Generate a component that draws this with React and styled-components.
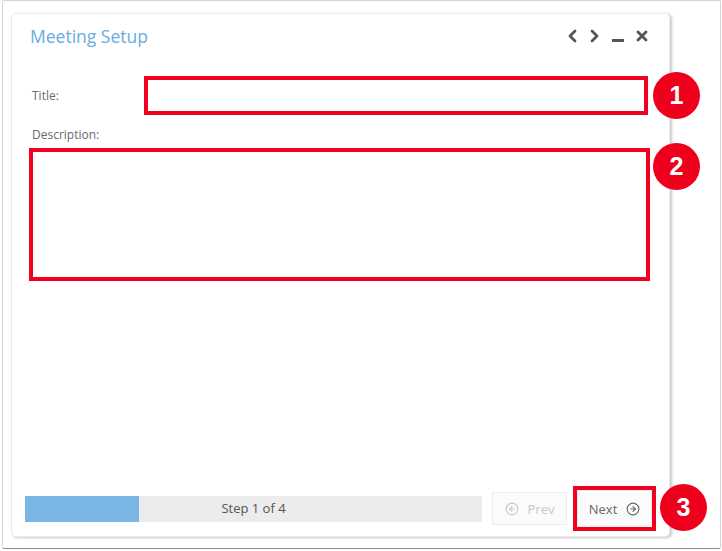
import styled, { createGlobalStyle } from "styled-components";
import { CircleArrowLeft, CircleArrowRight } from "lucide-react";

const GlobalStyle = createGlobalStyle`
  html, body {
    margin: 0;
    padding: 0;
    background: #ffffff;
  }
  body {
    font-family: "Open Sans", "Liberation Sans", sans-serif;
  }
`;

// the screenshot frame around the whole dialog
const Frame = styled.div`
  box-sizing: border-box;
  margin: 0 0 0 2px;
  width: 719px;
  height: 549px;
  border: 1px solid #d4d4d4;
  border-bottom-color: #8c8c8c;
  border-radius: 2px;
  padding: 12px 0 0 8px;
`;

const Dialog = styled.div`
  box-sizing: border-box;
  width: 659px;
  height: 524px;
  background: #fff;
  border: 1px solid #ececec;
  border-radius: 5px;
  box-shadow: 2px 1px 3px rgba(0, 0, 0, 0.22);
  display: flex;
  flex-direction: column;
`;

const Header = styled.div`
  display: flex;
  align-items: center;
  justify-content: space-between;
  padding: 10px 21px 0 18px;
  height: 24px;
`;

const Title = styled.div`
  font-size: 17.5px;
  line-height: 24px;
  color: #69acdf;
`;

const Controls = styled.div`
  display: flex;
  align-items: center;
  gap: 11px;
  color: #555;
`;

const FieldRow = styled.div`
  display: flex;
  align-items: center;
  margin: 28px 0 0 20px;
`;

const Label = styled.div`
  width: ${(p) => p.$width || "auto"};
  font-size: 12px;
  line-height: 16px;
  color: #6a6a6a;
`;

const DescLabel = styled(Label)`
  margin: 12px 0 0 20px;
`;

const Highlight = styled.div`
  position: relative;
  box-sizing: border-box;
  width: ${(p) => p.$w}px;
  height: ${(p) => p.$h}px;
  border: 4px solid #f2001f;
  margin: ${(p) => p.$margin || "0"};
  display: flex;
  background: #fff;
`;

const Badge = styled.div`
  position: absolute;
  width: 47px;
  height: 47px;
  border-radius: 50%;
  background: #ee001c;
  color: #fff;
  font-family: "Liberation Sans", Arial, sans-serif;
  font-weight: bold;
  font-size: 25px;
  display: flex;
  align-items: center;
  justify-content: center;
  right: ${(p) => p.$right}px;
  top: ${(p) => p.$top}px;
`;

const Spacer = styled.div`
  flex: 1;
`;

const Footer = styled.div`
  display: flex;
  align-items: center;
  padding: 0 0 5px 13px;
`;

const Progress = styled.div`
  position: relative;
  width: 457px;
  height: 26px;
  background: #ececec;
  display: flex;
  align-items: center;
  justify-content: center;
  font-size: 13px;
  color: #555;
  overflow: hidden;
`;

const Fill = styled.div`
  position: absolute;
  left: 0;
  top: 0;
  bottom: 0;
  background: #7ab6e3;
`;

const StepText = styled.span`
  position: relative;
  line-height: 26px;
  margin-top: -2px;
`;

const Button = styled.div`
  box-sizing: border-box;
  display: flex;
  align-items: center;
  justify-content: center;
  gap: 9px;
  width: ${(p) => p.$w}px;
  height: ${(p) => p.$h}px;
  margin-left: ${(p) => p.$ml || 0}px;
  border: 1px solid #ededed;
  background: #fbfbfb;
  font-size: 13px;
  color: ${(p) => (p.$disabled ? "#c8c8c8" : "#666")};
`;

function Chevron({ dir }) {
  const d = dir === "left" ? "M8 2 L3 7 L8 12" : "M3 2 L8 7 L3 12";
  return (
    <svg width="11" height="14" viewBox="0 0 11 14">
      <path d={d} fill="none" stroke="currentColor" strokeWidth="2.8" strokeLinecap="round" strokeLinejoin="round" />
    </svg>
  );
}

function Minimize() {
  return (
    <svg width="14" height="14" viewBox="0 0 14 14">
      <rect x="1" y="10" width="12" height="3" fill="currentColor" />
    </svg>
  );
}

function Close() {
  return (
    <svg width="12" height="14" viewBox="0 0 12 14">
      <path d="M2 3 L10 11 M10 3 L2 11" stroke="currentColor" strokeWidth="2.8" strokeLinecap="round" />
    </svg>
  );
}

export default function App() {
  const step = 1;
  const total = 4;
  return (
    <>
      <GlobalStyle />
      <Frame>
        <Dialog>
          <Header>
            <Title>Meeting Setup</Title>
            <Controls>
              <Chevron dir="left" />
              <Chevron dir="right" />
              <Minimize />
              <Close />
            </Controls>
          </Header>

          <FieldRow>
            <Label $width="112px">Title:</Label>
            <Highlight $w={504} $h={39}>
              <Badge $right={-56} $top={-8}>1</Badge>
            </Highlight>
          </FieldRow>

          <DescLabel>Description:</DescLabel>
          <Highlight $w={621} $h={133} $margin="5px 0 0 17px">
            <Badge $right={-54} $top={-9}>2</Badge>
          </Highlight>

          <Spacer />

          <Footer>
            <Progress>
              <Fill style={{ width: `${(step / total) * 100}%` }} />
              <StepText>
                Step {step} of {total}
              </StepText>
            </Progress>
            <Button $w={75} $h={33} $ml={10} $disabled>
              <CircleArrowLeft size={14} strokeWidth={2} />
              Prev
            </Button>
            <Highlight $w={83} $h={45} $margin="0 0 0 6px">
              <Button $w={75} $h={37}>
                Next
                <CircleArrowRight size={14} strokeWidth={2} />
              </Button>
              <Badge $right={-55} $top={-6}>3</Badge>
            </Highlight>
          </Footer>
        </Dialog>
      </Frame>
    </>
  );
}
